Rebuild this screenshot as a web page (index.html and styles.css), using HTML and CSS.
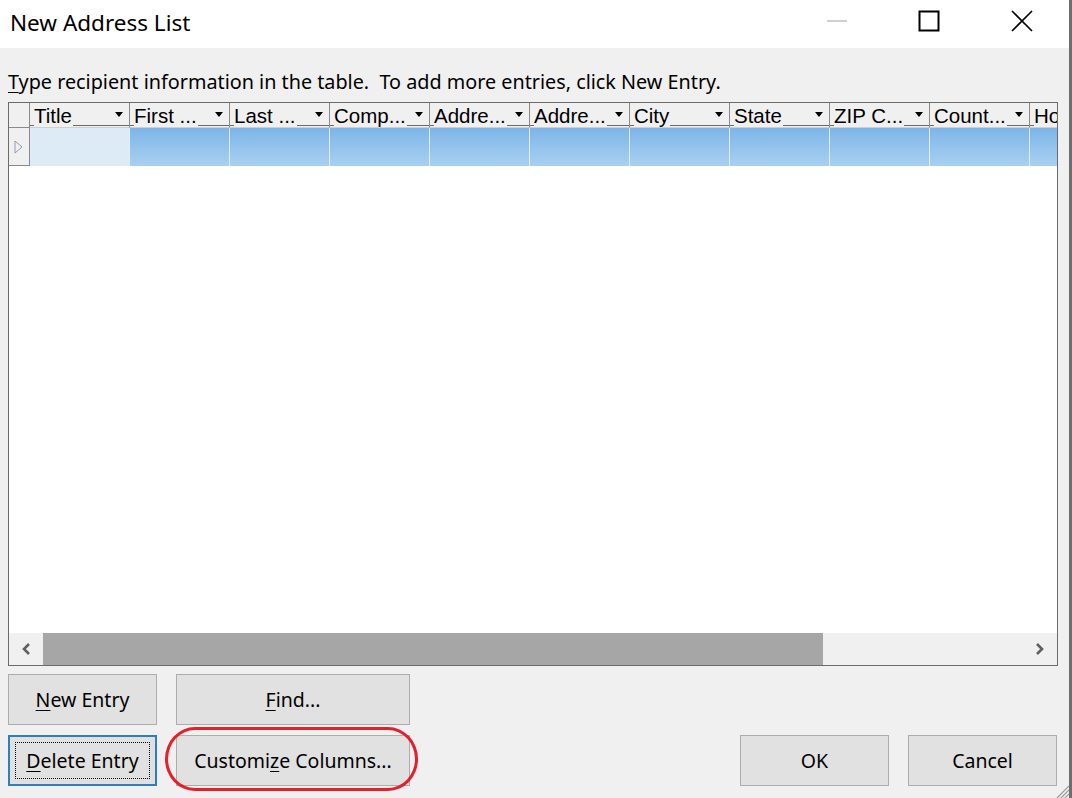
FILE: index.html
```html
<!DOCTYPE html>
<html lang="en">
<head>
    <meta charset="UTF-8">
    <meta name="viewport" content="width=device-width, initial-scale=1.0">
    <title>New Address List</title>
    <link rel="stylesheet" href="styles.css">
</head>
<body>
    <div class="window">
        <div class="titlebar">
            <span class="title">New Address List</span>
            <div class="controls">
                <span class="ctl ctl-min"><svg width="22" height="4" viewBox="0 0 22 4"><line x1="1" y1="2" x2="21" y2="2" stroke="#c6c6c6" stroke-width="1.6"/></svg></span>
                <span class="ctl ctl-max"><svg width="22" height="22" viewBox="0 0 22 22"><rect x="1.5" y="1.5" width="19" height="19" fill="none" stroke="#000" stroke-width="2"/></svg></span>
                <span class="ctl ctl-close"><svg width="22" height="22" viewBox="0 0 22 22"><path d="M1 1 L21 21 M21 1 L1 21" stroke="#000" stroke-width="1.6"/></svg></span>
            </div>
        </div>

        <div class="content">
            <p class="hint"><u>T</u>ype recipient information in the table.&nbsp; To add more entries, click New Entry.</p>

            <div class="grid">
                <div class="grid-head">
                    <div class="corner"></div>
                    <div class="hcell"><span class="hlabel">Title</span><span class="hline"></span><span class="harrow"></span></div>
                    <div class="hcell"><span class="hlabel">First ...</span><span class="hline"></span><span class="harrow"></span></div>
                    <div class="hcell"><span class="hlabel">Last ...</span><span class="hline"></span><span class="harrow"></span></div>
                    <div class="hcell"><span class="hlabel">Comp...</span><span class="hline"></span><span class="harrow"></span></div>
                    <div class="hcell"><span class="hlabel">Addre...</span><span class="hline"></span><span class="harrow"></span></div>
                    <div class="hcell"><span class="hlabel">Addre...</span><span class="hline"></span><span class="harrow"></span></div>
                    <div class="hcell"><span class="hlabel">City</span><span class="hline"></span><span class="harrow"></span></div>
                    <div class="hcell"><span class="hlabel">State</span><span class="hline"></span><span class="harrow"></span></div>
                    <div class="hcell"><span class="hlabel">ZIP C...</span><span class="hline"></span><span class="harrow"></span></div>
                    <div class="hcell"><span class="hlabel">Count...</span><span class="hline"></span><span class="harrow"></span></div>
                    <div class="hcell hcell-last"><span class="hlabel">Ho</span></div>
                </div>
                <div class="grid-row">
                    <div class="rowhead">
                        <svg width="9" height="14" viewBox="0 0 9 14"><path d="M1 1 L8 7 L1 13 Z" fill="none" stroke="#8f9cb6" stroke-width="1"/></svg>
                    </div>
                    <div class="cell cell-current"></div>
                    <div class="cell"></div>
                    <div class="cell"></div>
                    <div class="cell"></div>
                    <div class="cell"></div>
                    <div class="cell"></div>
                    <div class="cell"></div>
                    <div class="cell"></div>
                    <div class="cell"></div>
                    <div class="cell"></div>
                    <div class="cell"></div>
                </div>
                <div class="grid-body"></div>
                <div class="hscroll">
                    <span class="sbtn"><svg width="10" height="14" viewBox="0 0 10 14"><path d="M8 2 L3 7 L8 12" fill="none" stroke="#606060" stroke-width="2.6"/></svg></span>
                    <div class="track"><div class="thumb"></div></div>
                    <span class="sbtn"><svg width="10" height="14" viewBox="0 0 10 14"><path d="M2 2 L7 7 L2 12" fill="none" stroke="#606060" stroke-width="2.6"/></svg></span>
                </div>
            </div>

            <div class="actions">
                <div class="left-buttons">
                    <button class="btn btn-small"><u>N</u>ew Entry</button>
                    <button class="btn btn-wide"><u>F</u>ind...</button>
                    <button class="btn btn-small btn-focus"><span class="focus-ring"><u>D</u>elete Entry</span></button>
                    <div class="marked">
                        <button class="btn btn-wide">Customi<u>z</u>e Columns...</button>
                        <span class="red-mark"></span>
                    </div>
                </div>
                <div class="right-buttons">
                    <button class="btn btn-small">OK</button>
                    <button class="btn btn-small">Cancel</button>
                </div>
            </div>
            <svg class="grip" width="14" height="20" viewBox="0 0 14 20">
                <path d="M14 8 L2 20 M14 12 L6 20 M14 16 L10 20" stroke="#9a9a9a" stroke-width="1.2"/>
            </svg>
        </div>
    </div>
</body>
</html>
```

FILE: styles.css
```css
* {
    box-sizing: border-box;
}

body {
    margin: 0;
    font-family: "Noto Sans", "Open Sans", sans-serif;
    background-color: #f0f0f0;
    color: #000;
}

.window {
    width: 1072px;
    height: 798px;
    border-right: 3px solid #6e6e6e;
    background-color: #f0f0f0;
    display: flex;
    flex-direction: column;
    overflow: hidden;
}

/* barra de titulo */
.titlebar {
    height: 48px;
    flex-shrink: 0;
    background-color: #fff;
    display: flex;
    align-items: center;
    justify-content: space-between;
    border-right: 3px solid #2e2e2e;
    margin-right: -3px;
}

.title {
    font-size: 22.5px;
    padding-left: 10px;
    margin-top: -3px;
}

.controls {
    display: flex;
    align-items: center;
    height: 100%;
}

.ctl {
    width: 92px;
    display: flex;
    justify-content: center;
    align-items: center;
    height: 100%;
}

.ctl svg {
    display: block;
    margin-top: -6px;
}

.ctl-close {
    width: 94px;
}

.content {
    flex: 1;
    display: flex;
    flex-direction: column;
    padding: 0 11px 12px 8px;
    position: relative;
}

.hint {
    margin: 19px 0 0 0;
    font-size: 19.8px;
    line-height: 30px;
    height: 35px;
    flex-shrink: 0;
}

.hint u {
    text-underline-offset: 3px;
}

/* tabela */
.grid {
    height: 564px;
    flex-shrink: 0;
    border: 1px solid #6b6b6b;
    background-color: #fff;
    display: flex;
    flex-direction: column;
    overflow: hidden;
}

.grid-head {
    display: flex;
    height: 25px;
    flex-shrink: 0;
    background-color: #f0f0f0;
    font-family: "Liberation Sans", Arial, sans-serif;
    font-size: 20.5px;
}

.corner {
    width: 21px;
    flex-shrink: 0;
    border-right: 1px solid #8a8a8a;
    border-bottom: 1px solid #8a8a8a;
}

.hcell {
    width: 100px;
    flex-shrink: 0;
    display: flex;
    align-items: flex-end;
    padding-left: 4px;
    padding-right: 3px;
    border-right: 1px solid #8a8a8a;
    border-bottom: 1px solid #cfcfcf;
    position: relative;
    overflow: hidden;
}

.hcell::before {
    content: "";
    position: absolute;
    left: 0;
    right: 0;
    bottom: 1px;
    border-bottom: 1px solid #6a6a6a;
}

.hcell-last {
    width: 28px;
    border-right: none;
}

.hlabel {
    position: relative;
    background-color: #f0f0f0;
    line-height: 22px;
    white-space: nowrap;
    z-index: 1;
    padding-right: 1px;
}

.hline {
    flex: 1;
}

.harrow {
    width: 0;
    height: 0;
    border-left: 4px solid transparent;
    border-right: 4px solid transparent;
    border-top: 5px solid #000;
    align-self: center;
    margin: 0 3px 2px 0;
}

.grid-row {
    display: flex;
    height: 38px;
    flex-shrink: 0;
}

.rowhead {
    width: 21px;
    flex-shrink: 0;
    background-color: #f0f0f0;
    border-right: 1px solid #8a8a8a;
    border-bottom: 1px solid #8a8a8a;
    display: flex;
    align-items: center;
    padding-left: 5px;
}

.cell {
    width: 100px;
    flex-shrink: 0;
    background: linear-gradient(#7db5e8, #a9d0f1);
    border-right: 1px solid #e4eef8;
}

.cell-current {
    background: #ddebf7;
}

.grid-body {
    flex: 1;
}

/* barra de rolagem */
.hscroll {
    height: 32px;
    flex-shrink: 0;
    display: flex;
    background-color: #f0f0f0;
}

.sbtn {
    width: 34px;
    display: flex;
    align-items: center;
    justify-content: center;
}

.track {
    flex: 1;
    display: flex;
}

.thumb {
    width: 780px;
    background-color: #a6a6a6;
}

/* botoes */
.actions {
    display: flex;
    justify-content: space-between;
    align-items: flex-end;
    margin-top: 8px;
    padding-right: 1px;
}

.left-buttons {
    display: grid;
    grid-template-columns: 149px 234px;
    column-gap: 19px;
    row-gap: 10px;
}

.right-buttons {
    display: flex;
    gap: 19px;
}

.btn {
    height: 51px;
    background-color: #e1e1e1;
    border: 1px solid #adadad;
    font-family: "Noto Sans", "Open Sans", sans-serif;
    font-size: 19.5px;
    color: #000;
    padding: 0;
}

.btn-small {
    width: 149px;
}

.btn-wide {
    width: 234px;
}

.btn u {
    text-underline-offset: 3px;
}

.btn-focus {
    border: 2px solid #2f7fbf;
    padding: 5px;
}

.focus-ring {
    display: flex;
    align-items: center;
    justify-content: center;
    height: 100%;
    border: 1px dotted #000;
}

.marked {
    position: relative;
}

.red-mark {
    position: absolute;
    left: -11px;
    top: -8px;
    right: -8px;
    bottom: -5px;
    border: 3px solid #e3202b;
    border-radius: 30px / 32px;
    pointer-events: none;
}

.grip {
    position: absolute;
    right: 0;
    bottom: 0;
}
```
